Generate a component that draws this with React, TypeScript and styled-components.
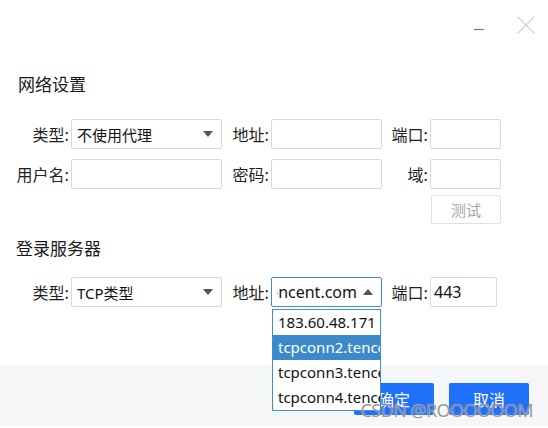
import React from 'react';
import styled, { createGlobalStyle, css } from 'styled-components';

// Global reset
const GlobalStyle = createGlobalStyle`
  html, body {
    margin: 0;
    padding: 0;
    background: #ffffff;
  }
  body {
    font-family: 'Noto Sans', 'Noto Sans CJK SC', sans-serif;
    color: #1f1f1f;
  }
`;

// Layout
const Dialog = styled.div`
  position: relative;
  width: 548px;
  height: 428px;
  display: flex;
  flex-direction: column;
  background: #ffffff;
  overflow: hidden;
`;

const TitleBar = styled.div`
  height: 60px;
  box-sizing: border-box;
  display: flex;
  justify-content: flex-end;
  align-items: flex-start;
  gap: 29px;
  padding: 16px 13px 0 0;
`;

const WinButton = styled.button`
  width: 18px;
  height: 18px;
  padding: 0;
  border: none;
  background: transparent;
  display: block;
  cursor: pointer;
`;

const Content = styled.div`
  padding-left: 17px;
  display: flex;
  flex-direction: column;
`;

const SectionTitle = styled.div<{ $top: number; $indent?: number }>`
  margin-top: ${(p) => p.$top}px;
  margin-left: ${(p) => p.$indent ?? 0}px;
  font-family: 'Noto Sans CJK SC', sans-serif;
  font-size: 17px;
  line-height: 24px;
  color: #1a1a1a;
`;

const FieldGrid = styled.div<{ $top: number }>`
  margin-top: ${(p) => p.$top}px;
  margin-left: -17px;
  display: grid;
  grid-template-columns: 71px 151px 49px 111px 48px 71px;
  grid-auto-rows: 30px;
  row-gap: 10px;
`;

const Label = styled.label`
  display: flex;
  align-items: center;
  justify-content: flex-end;
  padding-right: 2px;
  font-family: 'Noto Sans CJK SC', sans-serif;
  font-size: 16px;
  color: #1f1f1f;
  white-space: nowrap;
`;

const fieldBox = css`
  box-sizing: border-box;
  height: 30px;
  border: 1px solid #d9d9d9;
  border-radius: 2px;
  background: #ffffff;
`;

const TextInput = styled.div<{ $width?: number }>`
  ${fieldBox};
  width: ${(p) => (p.$width ? `${p.$width}px` : '100%')};
  display: flex;
  align-items: center;
  padding-left: 3px;
  font-size: 16px;
  color: #111;
`;

const Combo = styled.div<{ $active?: boolean }>`
  ${fieldBox};
  position: relative;
  width: 100%;
  display: flex;
  align-items: center;
  padding: 0 8px 0 5px;
  gap: 6px;
  ${(p) =>
    p.$active &&
    css`
      border-color: #3c8ddb;
    `}
`;

const ComboText = styled.div<{ $scrolled?: boolean }>`
  flex: 1;
  min-width: 0;
  overflow: hidden;
  white-space: nowrap;
  display: flex;
  justify-content: ${(p) => (p.$scrolled ? 'flex-end' : 'flex-start')};
  font-size: ${(p) => (p.$scrolled ? 16 : 15)}px;
  color: #111;
`;

const Arrow = styled.span<{ $up?: boolean }>`
  flex: none;
  width: 0;
  height: 0;
  border-left: 5px solid transparent;
  border-right: 5px solid transparent;
  ${(p) =>
    p.$up
      ? css`
          border-bottom: 6px solid #555;
        `
      : css`
          border-top: 6px solid #555;
        `}
`;

const DropList = styled.ul`
  position: absolute;
  top: calc(100% + 3px);
  left: 0;
  width: 109px;
  margin: 0;
  padding: 0;
  list-style: none;
  box-sizing: border-box;
  border: 1px solid #3c8ddb;
  background: #ffffff;
  z-index: 5;
`;

const DropItem = styled.li<{ $selected?: boolean }>`
  height: 25px;
  line-height: 25px;
  padding-left: 5px;
  overflow: hidden;
  white-space: nowrap;
  font-size: 15px;
  color: ${(p) => (p.$selected ? '#ffffff' : '#111')};
  background: ${(p) => (p.$selected ? '#3c8acb' : 'transparent')};
`;

const TestRow = styled.div`
  margin-top: 6px;
  display: flex;
  justify-content: flex-end;
  padding-right: 47px;
`;

const TestButton = styled.button`
  box-sizing: border-box;
  width: 70px;
  height: 29px;
  border: 1px solid #e0e0e0;
  border-radius: 2px;
  background: #ffffff;
  color: #a6a6a6;
  font-family: 'Noto Sans CJK SC', sans-serif;
  font-size: 15px;
  padding: 0;
`;

const Footer = styled.div`
  margin-top: auto;
  margin-bottom: 2px;
  height: 61px;
  box-sizing: border-box;
  background: #f5f6f8;
  display: flex;
  justify-content: flex-end;
  align-items: flex-start;
  gap: 15px;
  padding: 18px 19px 0 0;
`;

const PrimaryButton = styled.button`
  width: 80px;
  height: 32px;
  border: none;
  border-radius: 2px;
  background: #1f70fa;
  color: #ffffff;
  font-family: 'Noto Sans CJK SC', sans-serif;
  font-size: 16px;
  padding: 0;
`;

const Watermark = styled.div`
  position: absolute;
  right: 15px;
  bottom: 6px;
  font-family: 'Noto Sans', sans-serif;
  font-size: 18px;
  font-weight: 400;
  letter-spacing: -0.6px;
  color: rgba(125, 125, 125, 0.8);
  text-shadow: 0 0 1px rgba(255, 255, 255, 0.8);
  pointer-events: none;
  z-index: 10;
`;

const addresses = ['183.60.48.171', 'tcpconn2.tencent.com', 'tcpconn3.tencent.com', 'tcpconn4.tencent.com'];

export default function App(): JSX.Element {
  return (
    <>
      <GlobalStyle />
      <Dialog>
        <TitleBar>
          <WinButton aria-label="minimize">
            <svg width="18" height="18" viewBox="0 0 18 18">
              <line x1="4" y1="13.5" x2="14" y2="13.5" stroke="#7a7a7a" strokeWidth="1.2" />
            </svg>
          </WinButton>
          <WinButton aria-label="close">
            <svg width="18" height="18" viewBox="0 0 18 18">
              <path d="M0.5 0.5 L17.5 17.5 M17.5 0.5 L0.5 17.5" stroke="#cfcfcf" strokeWidth="1.2" fill="none" />
            </svg>
          </WinButton>
        </TitleBar>

        <Content>
          <SectionTitle $top={12} $indent={1}>网络设置</SectionTitle>
          <FieldGrid $top={23}>
            <Label>类型:</Label>
            <Combo>
              <ComboText>不使用代理</ComboText>
              <Arrow />
            </Combo>
            <Label>地址:</Label>
            <TextInput />
            <Label>端口:</Label>
            <TextInput />

            <Label>用户名:</Label>
            <TextInput />
            <Label>密码:</Label>
            <TextInput />
            <Label>域:</Label>
            <TextInput />
          </FieldGrid>
          <TestRow>
            <TestButton>测试</TestButton>
          </TestRow>

          <SectionTitle $top={12} $indent={-1}>登录服务器</SectionTitle>
          <FieldGrid $top={17}>
            <Label>类型:</Label>
            <Combo>
              <ComboText>TCP类型</ComboText>
              <Arrow />
            </Combo>
            <Label>地址:</Label>
            <Combo $active>
              <ComboText $scrolled>tcpconn2.tencent.com</ComboText>
              <Arrow $up />
              <DropList>
                {addresses.map((a, i) => (
                  <DropItem key={a} $selected={i === 1}>
                    {a}
                  </DropItem>
                ))}
              </DropList>
            </Combo>
            <Label>端口:</Label>
            <TextInput $width={67}>443</TextInput>
          </FieldGrid>
        </Content>

        <Footer>
          <PrimaryButton>确定</PrimaryButton>
          <PrimaryButton>取消</PrimaryButton>
        </Footer>
        <Watermark>CSDN @ROOOOOOM</Watermark>
      </Dialog>
    </>
  );
}
